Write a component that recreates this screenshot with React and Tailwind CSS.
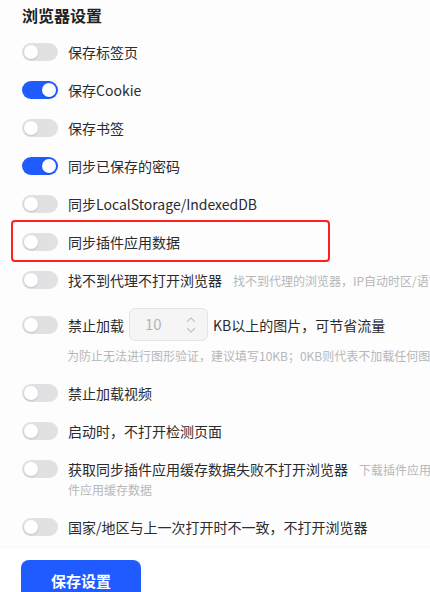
import React, { useState } from 'react';

const Toggle = ({ on, onChange }) => (
  <button
    type="button"
    onClick={onChange}
    className={`relative block shrink-0 w-[36px] h-[18px] rounded-full transition-colors ${on ? 'bg-[#1f5bff]' : 'bg-[#e1e1e4]'}`}
  >
    <span
      className={`absolute top-[2px] w-[14px] h-[14px] rounded-full bg-white shadow-[0_1px_2px_rgba(0,0,0,0.15)] ${on ? 'left-[20px]' : 'left-[2px]'}`}
    />
  </button>
);

const Row = ({ on, onChange, children, highlight }) => (
  <div className="relative flex items-start">
    <div className="flex mt-[1px]">
      <Toggle on={on} onChange={onChange} />
    </div>
    <div className="ml-[10px] w-[600px] leading-[20px]">{children}</div>
    {/* annotation box */}
    {highlight && (
      <div className="absolute left-[-11px] top-[-12px] w-[319px] h-[42px] border-2 border-[#ff1f1f] rounded-[4px] pointer-events-none" />
    )}
  </div>
);

const Hint = ({ children }) => (
  <span className="ml-[11px] text-[12px] leading-none text-[#b7b7b9]">{children}</span>
);

export default function App() {
  const [opts, setOpts] = useState({
    tabs: false,
    cookie: true,
    bookmark: false,
    password: true,
    storage: false,
    extension: false,
    proxy: false,
    image: false,
    video: false,
    checkPage: false,
    extCache: false,
    region: false,
  });
  const [kb, setKb] = useState(10);

  const flip = (key) => setOpts({ ...opts, [key]: !opts[key] });

  return (
    <div
      className="w-[430px] h-[592px] overflow-hidden bg-white text-[14px] text-[#2b2b2e]"
      style={{ fontFamily: '"Noto Sans CJK SC", "Liberation Sans", sans-serif' }}
    >
      <div className="w-[700px] bg-[#fdfdfd]">
        <div className="pl-[22px] pt-[3px] pb-[11px]">
          <h3 className="text-[16px] leading-[24px] font-bold text-[#222]">浏览器设置</h3>

          <div className="mt-[15px] flex flex-col gap-[18px]">
            <Row on={opts.tabs} onChange={() => flip('tabs')}>保存标签页</Row>
            <Row on={opts.cookie} onChange={() => flip('cookie')}>保存Cookie</Row>
            <Row on={opts.bookmark} onChange={() => flip('bookmark')}>保存书签</Row>
            <Row on={opts.password} onChange={() => flip('password')}>同步已保存的密码</Row>
            <Row on={opts.storage} onChange={() => flip('storage')}>同步LocalStorage/IndexedDB</Row>
            <Row on={opts.extension} onChange={() => flip('extension')} highlight>
              同步插件应用数据
            </Row>
            <Row on={opts.proxy} onChange={() => flip('proxy')}>
              找不到代理不打开浏览器
              <Hint>找不到代理的浏览器，IP自动时区/语言等设置将无法正确生效</Hint>
            </Row>

            {/* image size limit */}
            <div>
              <div className="flex items-center">
                <Toggle on={opts.image} onChange={() => flip('image')} />
                <span className="ml-[10px] leading-[20px]">禁止加载</span>
                <div className="ml-[5px] relative w-[79px] h-[33px] rounded-[6px] border border-[#e4e4e7] bg-[#f5f5f6] flex items-center">
                  <input
                    value={kb}
                    onChange={(e) => setKb(e.target.value)}
                    className="w-[50px] pl-[15px] bg-transparent outline-none text-[15px] text-[#b4b4b6]"
                  />
                  <svg className="absolute right-[11px] top-[6px]" width="10" height="20" viewBox="0 0 10 20" fill="none" stroke="#c4c4c7" strokeWidth="1.2" strokeLinecap="round" strokeLinejoin="round">
                    <path d="M1.5 6.5 L5 3 L8.5 6.5" />
                    <path d="M1.5 13.5 L5 17 L8.5 13.5" />
                  </svg>
                </div>
                <span className="ml-[5px] leading-[20px]">KB以上的图片，可节省流量</span>
              </div>
              <div className="ml-[45px] mt-[6px] text-[12px] leading-[18px] text-[#b7b7b9]">
                为防止无法进行图形验证，建议填写10KB；0KB则代表不加载任何图片
              </div>
            </div>

            <Row on={opts.video} onChange={() => flip('video')}>禁止加载视频</Row>
            <Row on={opts.checkPage} onChange={() => flip('checkPage')}>启动时，不打开检测页面</Row>
            <Row on={opts.extCache} onChange={() => flip('extCache')}>
              获取同步插件应用缓存数据失败不打开浏览器
              <Hint>下载插件应用缓存数据失败时不打开浏览器，防止丢失插件应用缓存数据</Hint>
            </Row>
            <Row on={opts.region} onChange={() => flip('region')}>
              国家/地区与上一次打开时不一致，不打开浏览器
            </Row>
          </div>
        </div>
      </div>

      <div className="w-[700px] bg-white pl-[21px] pt-[12px] shadow-[0_-1px_4px_rgba(0,0,0,0.03)]">
        <button
          type="button"
          className="w-[120px] h-[42px] rounded-[8px] bg-[#1f5bff] text-white text-[15px] font-bold"
        >
          保存设置
        </button>
      </div>
    </div>
  );
}
